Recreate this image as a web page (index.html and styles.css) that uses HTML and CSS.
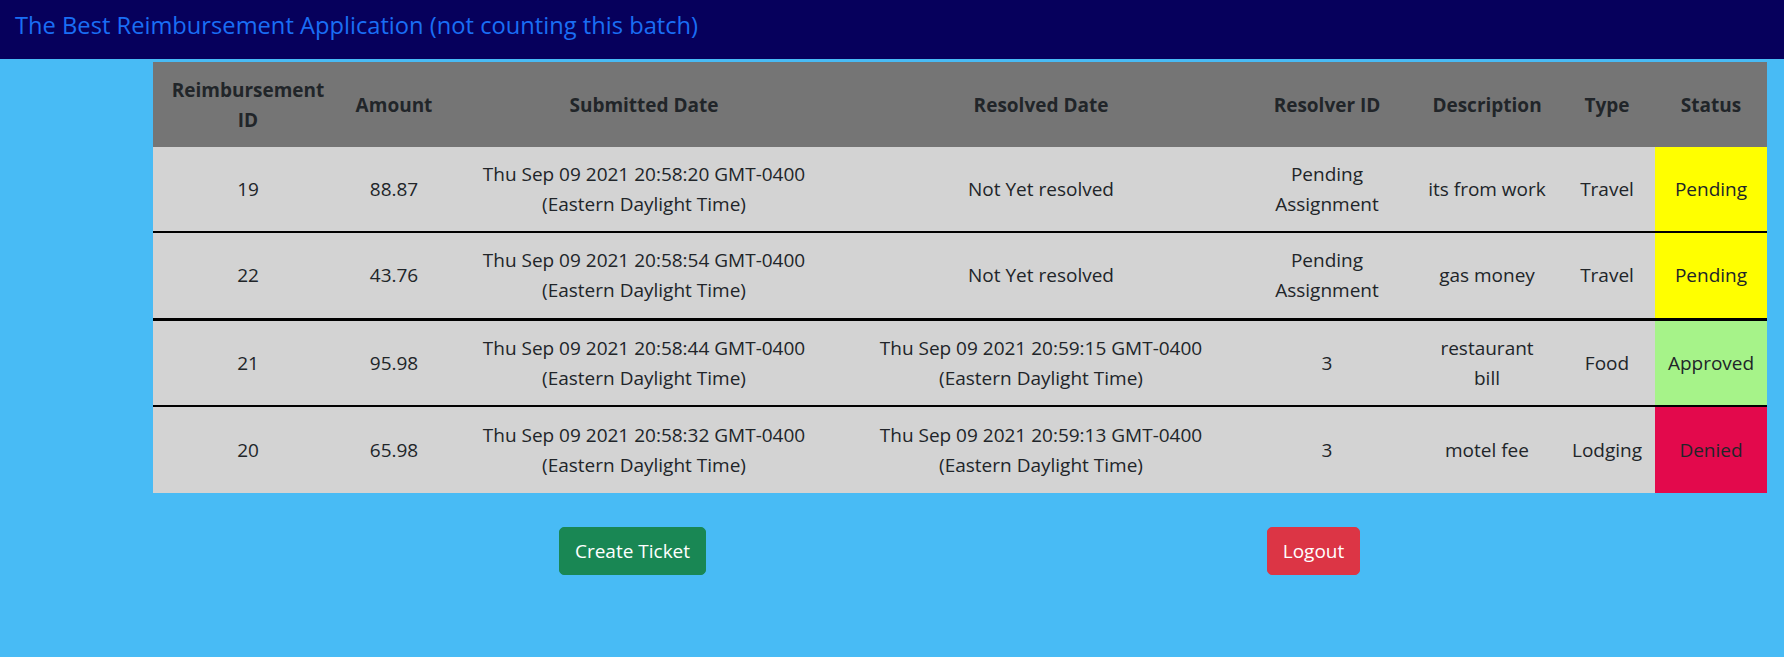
FILE: index.html
```html
<!DOCTYPE html>
<html>
<head>
<meta charset="utf-8">
<link rel="stylesheet" href="styles.css">
</head>
<body>
<nav class="navbar"><span class="brand">The Best Reimbursement Application (not counting this batch)</span></nav>
<main class="content">
  <table class="tickets">
    <colgroup>
      <col class="c-id"><col class="c-amt"><col class="c-sub"><col class="c-res"><col class="c-rid"><col class="c-desc"><col class="c-type"><col class="c-status">
    </colgroup>
    <thead>
      <tr><th>Reimbursement ID</th><th>Amount</th><th>Submitted Date</th><th>Resolved Date</th><th>Resolver ID</th><th>Description</th><th>Type</th><th>Status</th></tr>
    </thead>
    <tbody>
      <tr><td>19</td><td>88.87</td><td>Thu Sep 09 2021 20:58:20 GMT-0400 (Eastern Daylight Time)</td><td>Not Yet resolved</td><td>Pending Assignment</td><td>its from work</td><td>Travel</td><td class="st pending">Pending</td></tr>
      <tr><td>22</td><td>43.76</td><td>Thu Sep 09 2021 20:58:54 GMT-0400 (Eastern Daylight Time)</td><td>Not Yet resolved</td><td>Pending Assignment</td><td>gas money</td><td>Travel</td><td class="st pending">Pending</td></tr>
      <tr class="thick"><td>21</td><td>95.98</td><td>Thu Sep 09 2021 20:58:44 GMT-0400 (Eastern Daylight Time)</td><td>Thu Sep 09 2021 20:59:15 GMT-0400 (Eastern Daylight Time)</td><td>3</td><td>restaurant bill</td><td>Food</td><td class="st approved">Approved</td></tr>
      <tr><td>20</td><td>65.98</td><td>Thu Sep 09 2021 20:58:32 GMT-0400 (Eastern Daylight Time)</td><td>Thu Sep 09 2021 20:59:13 GMT-0400 (Eastern Daylight Time)</td><td>3</td><td>motel fee</td><td>Lodging</td><td class="st denied">Denied</td></tr>
    </tbody>
  </table>
  <div class="actions">
    <div class="action-cell"><button class="btn btn-create">Create Ticket</button></div>
    <div class="action-cell"><button class="btn btn-logout">Logout</button></div>
  </div>
</main>
</body>
</html>
```
FILE: styles.css
```css
* { box-sizing: border-box; }
html, body { margin: 0; padding: 0; }
body {
  background: #48bbf5;
  font-family: "Open Sans", "Noto Sans", sans-serif;
  font-size: 19px;
  line-height: 30px;
  color: #212529;
  min-height: 657px;
}
.navbar {
  background: #06005c;
  height: 59px;
  display: flex;
  align-items: flex-start;
  padding: 9px 0 0 15px;
}
.brand {
  color: #1a6ef5;
  font-size: 23.7px;
  line-height: 32px;
}
.content { padding-top: 3px; }
.tickets {
  margin-left: 153px;
  width: 1614px;
  table-layout: fixed;
  border-collapse: collapse;
  text-align: center;
}
.c-id { width: 190px; }
.c-amt { width: 102px; }
.c-sub { width: 398px; }
.c-res { width: 396px; }
.c-rid { width: 176px; }
.c-desc { width: 144px; }
.c-type { width: 96px; }
.c-status { width: 112px; }
.tickets th {
  background: #757575;
  font-weight: 700;
  height: 85px;
  padding: 10px 10px;
  vertical-align: middle;
}
.tickets td {
  background: #d3d3d3;
  height: 85px;
  padding: 10px 10px;
  vertical-align: middle;
}
.tickets tbody tr + tr td {
  border-top: 2px solid #000;
  height: 87px;
}
.tickets tbody tr.thick td {
  border-top-width: 3px;
  height: 87px;
}
.tickets td.pending { background: #ffff00; }
.tickets td.approved { background: #a6f389; }
.tickets td.denied { background: #e3094c; }
.actions {
  display: flex;
  margin-left: 292px;
  width: 1362px;
  margin-top: 34px;
}
.action-cell {
  flex: 1;
  display: flex;
  justify-content: center;
}
.btn {
  font-family: inherit;
  font-size: 19px;
  line-height: 30px;
  color: #fff;
  border: 1px solid transparent;
  border-radius: 5px;
  padding: 8px 15px;
  height: 48px;
}
.btn-create { background: #198754; border-color: #198754; }
.btn-logout { background: #dc3545; border-color: #dc3545; }
```
